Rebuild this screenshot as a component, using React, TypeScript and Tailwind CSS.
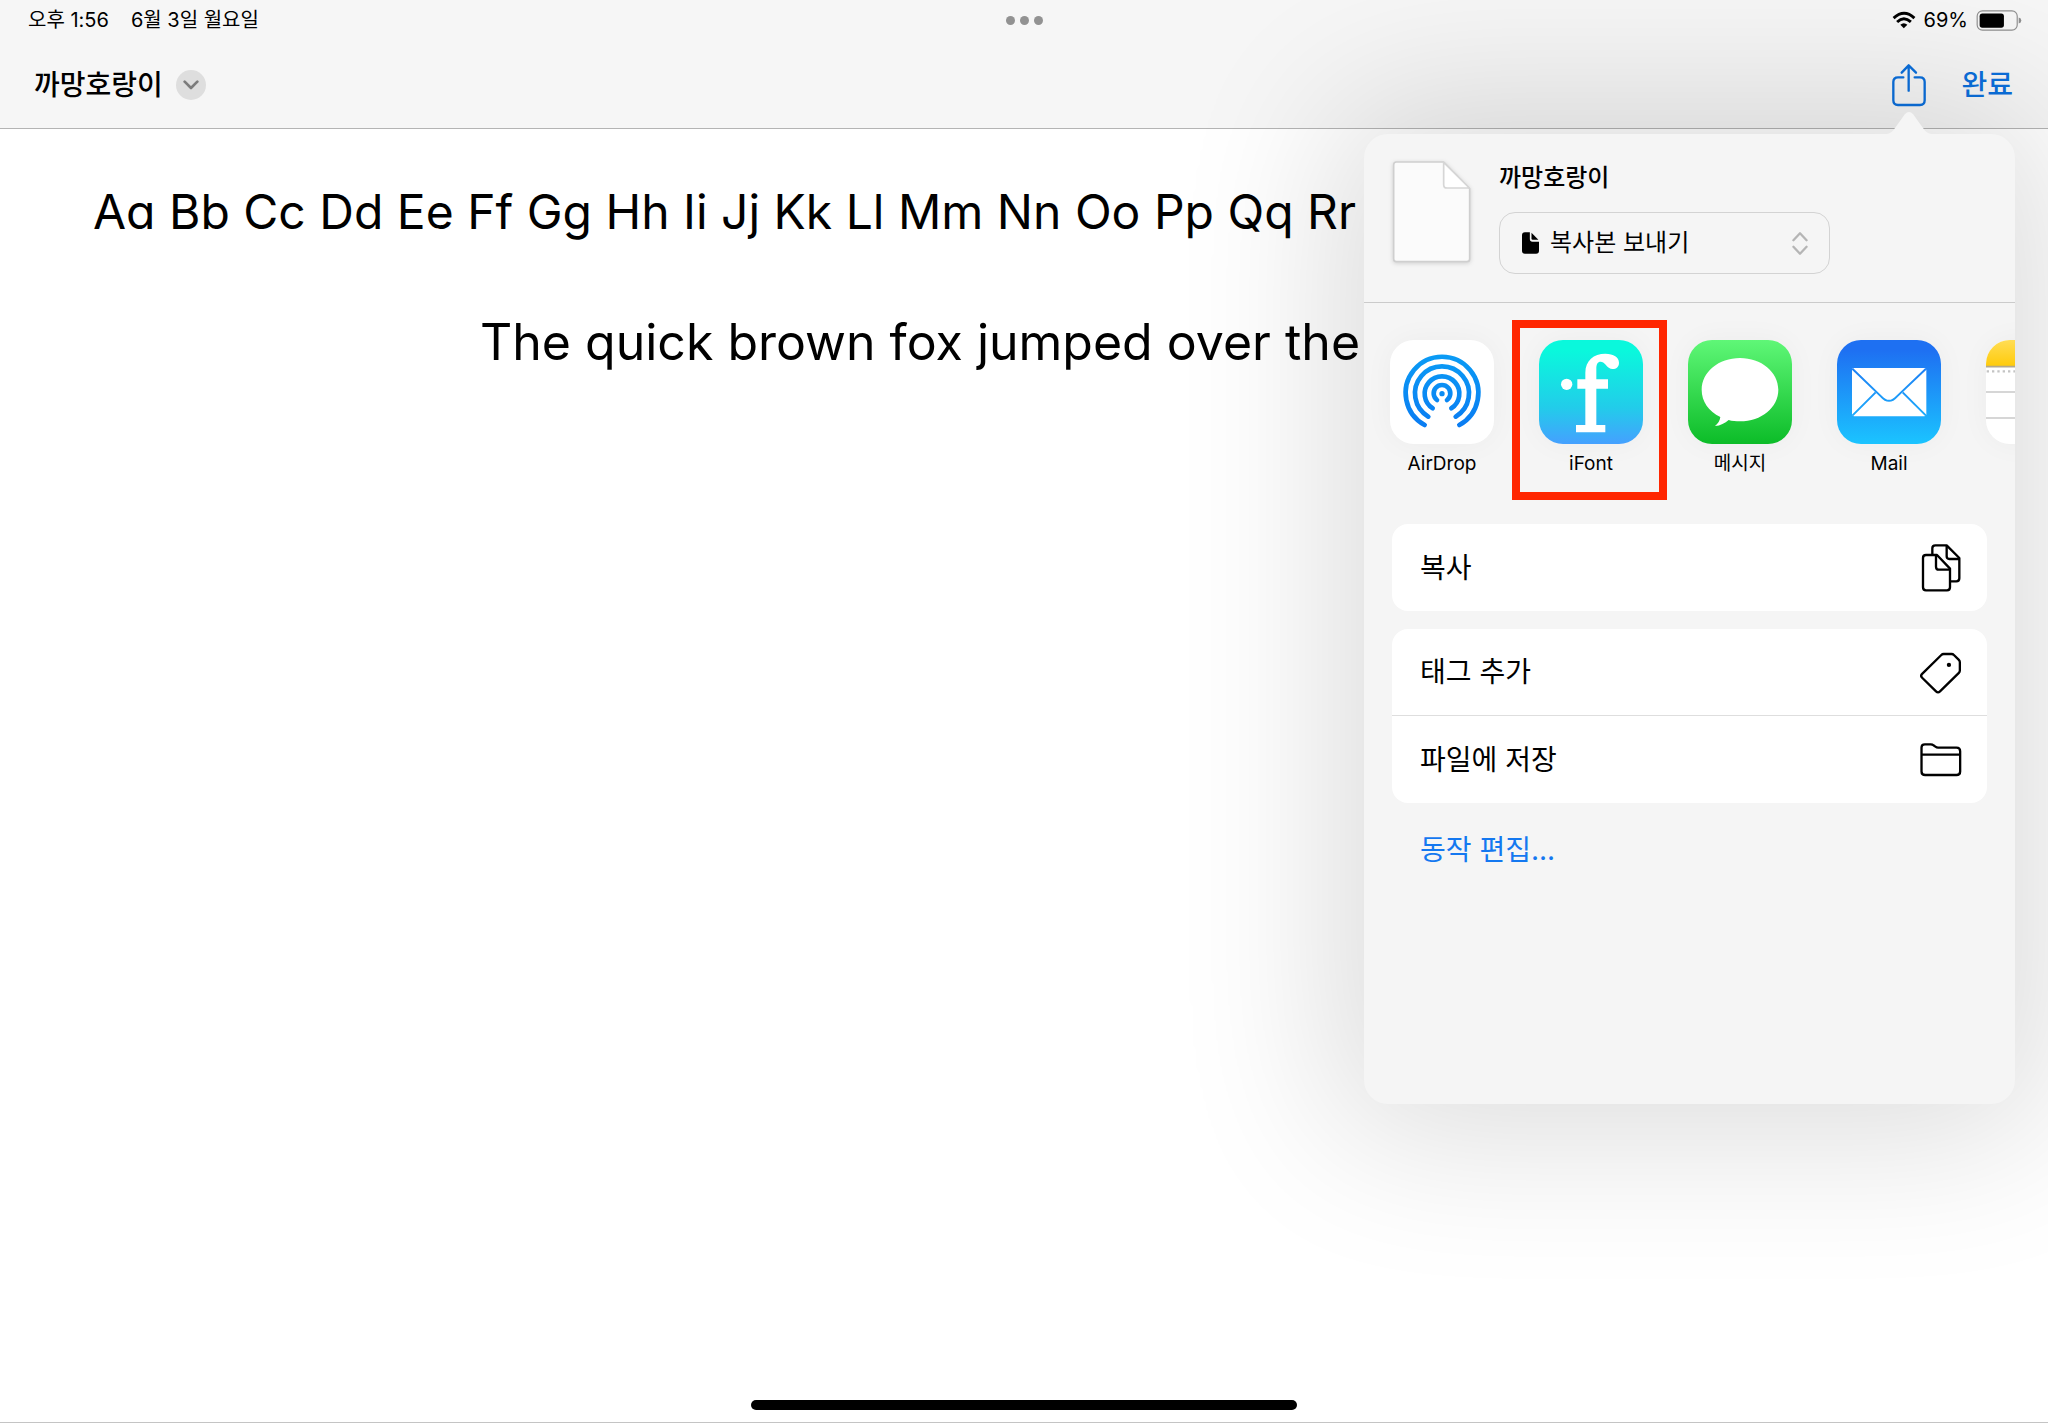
import type { ReactNode } from "react";

interface ShareApp {
  name: string;
  icon: ReactNode;
  highlighted?: boolean;
}

interface Action {
  label: string;
  icon: ReactNode;
}

function ShareIcon() {
  return (
    <svg viewBox="272 186 106 132" className="h-11 w-9" fill="none" stroke="currentColor" strokeWidth="7" strokeLinecap="round" strokeLinejoin="round">
      <path d="M308 229h-16q-14 0-14 14v55q0 14 14 14h66q14 0 14-14v-55q0-14-14-14h-16" />
      <path d="M324 269v-75M303 215l21-22 22 22" />
    </svg>
  );
}

function WifiIcon() {
  return (
    <svg viewBox="270 34 75 56" className="h-5 w-6" fill="none" stroke="#000" strokeWidth="9">
      <path d="M275 56q33-30 65 0" />
      <path d="M286 68q21-20 43 0" />
      <path d="M307 88l-11-11q11-10 22 0z" fill="#000" stroke="none" />
    </svg>
  );
}

function BatteryIcon() {
  return (
    <svg viewBox="528 30 138 64" className="h-[21px] w-[46px]">
      <rect x="530.5" y="32.5" width="122" height="59" rx="16" fill="none" stroke="#8f8f8f" strokeWidth="3.5" />
      <rect x="538" y="41" width="74" height="43" rx="8" fill="#000" />
      <path d="M657 53q8 2 8 9t-8 9z" fill="#8f8f8f" />
    </svg>
  );
}

function DocumentThumb() {
  return (
    <svg viewBox="90 146 252 330" className="-mx-1 -my-1 h-[110px] w-[84px] shrink-0 drop-shadow-sm">
      <path d="M109 158h142l78 80v211q0 8-8 8H109q-8 0-8-8V166q0-8 8-8z" fill="#fbfbfb" stroke="#cfcfcf" strokeWidth="5" />
      <path d="M251 159v67q0 10 10 10h67z" fill="#fff" stroke="#d6d6d6" strokeWidth="5" strokeLinejoin="round" />
    </svg>
  );
}

function CopyIcon() {
  return (
    <svg viewBox="180 100 126 150" className="h-[50px] w-[42px]" fill="none" stroke="#000" strokeWidth="7" strokeLinejoin="round">
      <path d="M217 136v-20q0-9 9-9h34l38 38v61q0 9-9 9h-18" />
      <path d="M260 108v32q0 8 8 8h29" />
      <path d="M198 136h33l39 41v56q0 9-9 9h-63q-9 0-9-9v-88q0-9 9-9z" />
      <path d="M228 137v34q0 9 9 9h32" />
    </svg>
  );
}

function TagIcon() {
  return (
    <svg viewBox="180 428 126 130" className="h-[43px] w-[42px]" fill="none" stroke="#000" strokeWidth="7" strokeLinejoin="round">
      <path d="M244 440q3-3 7-3h24q4 0 7 3l15 15q3 3 3 7v25q0 4-3 7l-57 56q-6 6-12 0l-42-41q-6-6 0-12z" />
      <circle cx="267" cy="470" r="6.5" fill="#000" stroke="none" />
    </svg>
  );
}

function FolderIcon() {
  return (
    <svg viewBox="180 700 126 106" className="h-[35px] w-[42px]" fill="none" stroke="#000" strokeWidth="7" strokeLinejoin="round">
      <path d="M184 717q0-10 10-10h18q5 0 8 3l6 4q4 3 8 3h56q11 0 11 11v61q0 11-11 11h-95q-11 0-11-11z" />
      <path d="M184 738h117" />
    </svg>
  );
}

function AirDropIcon() {
  return (
    <svg viewBox="0 0 312 312" className="size-full">
      <defs>
        <linearGradient id="airdrop" gradientUnits="userSpaceOnUse" x1="0" y1="45" x2="0" y2="262">
          <stop offset="0" stopColor="#0a9bf5" />
          <stop offset="1" stopColor="#0a7cf2" />
        </linearGradient>
      </defs>
      <rect width="312" height="312" fill="#fff" />
      <g fill="none" stroke="url(#airdrop)" strokeWidth="14" strokeLinecap="round">
        <path d="M104 255A109 109 0 1 1 208 255" />
        <path d="M115 230A81 81 0 1 1 197 230" />
        <path d="M128 205A52 52 0 1 1 184 205" />
        <path d="M141 180A25 25 0 1 1 171 180" />
      </g>
      <circle cx="156" cy="161" r="8" fill="#0a8cf4" />
    </svg>
  );
}

function IFontIcon() {
  return (
    <svg viewBox="0 0 312 312" className="size-full">
      <defs>
        <linearGradient id="ifont" x1="0" y1="0" x2="0" y2="1">
          <stop offset="0.1" stopColor="#0af8dc" />
          <stop offset="0.65" stopColor="#22ccea" />
          <stop offset="1" stopColor="#45a0ff" />
        </linearGradient>
      </defs>
      <rect width="312" height="312" fill="url(#ifont)" />
      <circle cx="83" cy="133" r="17" fill="#fff" />
      <path
        d="M115 118h24V98c0-36 25-57 60-57 25 0 41 11 41 27 0 12-8 19-19 19-9 0-15-6-21-13-5-6-10-9-15-9-9 0-13 8-13 20v33h35v28h-35v109h27v22h-88v-22h28V146h-24z"
        fill="#fff"
      />
    </svg>
  );
}

function MessagesIcon() {
  return (
    <svg viewBox="0 0 312 312" className="size-full">
      <defs>
        <linearGradient id="messages" x1="0" y1="0" x2="0" y2="1">
          <stop offset="0" stopColor="#5ff777" />
          <stop offset="1" stopColor="#0cbc28" />
        </linearGradient>
      </defs>
      <rect width="312" height="312" fill="url(#messages)" />
      <path d="M156 54c64 0 115 42 115 95s-51 95-115 95c-12 0-24-1-34-4-11 10-25 17-41 18 9-7 15-16 16-27-35-17-56-47-56-82 0-53 51-95 115-95z" fill="#fff" />
    </svg>
  );
}

function MailIcon() {
  return (
    <svg viewBox="0 0 312 312" className="size-full">
      <defs>
        <linearGradient id="mail" gradientUnits="userSpaceOnUse" x1="0" y1="0" x2="0" y2="312">
          <stop offset="0.1" stopColor="#1e70f2" />
          <stop offset="1" stopColor="#1bc4ff" />
        </linearGradient>
      </defs>
      <rect width="312" height="312" fill="url(#mail)" />
      <rect x="45" y="84" width="223" height="145" rx="6" fill="#fff" />
      <g fill="none" stroke="url(#mail)" strokeWidth="6">
        <path d="M46 86l86 83q24 27 48 0l87-83" />
        <path d="M46 227l70-70M267 227l-70-70" />
      </g>
    </svg>
  );
}

function NotesIcon() {
  return (
    <svg viewBox="0 0 312 312" className="size-full">
      <defs>
        <linearGradient id="notes" x1="0" y1="0" x2="0" y2="1">
          <stop offset="0" stopColor="#ffdd55" />
          <stop offset="1" stopColor="#ffcb0b" />
        </linearGradient>
      </defs>
      <rect width="312" height="312" fill="#fff" />
      <rect width="312" height="78" fill="url(#notes)" />
      <path d="M0 80h312" stroke="#b3a98c" strokeWidth="5" />
      <path d="M2 94h310" stroke="#c4c4c4" strokeWidth="7" strokeDasharray="7 9" />
      <path d="M0 156h312M0 234h312" stroke="#c9c9c9" strokeWidth="4" />
    </svg>
  );
}

const apps: ShareApp[] = [
  { name: "AirDrop", icon: <AirDropIcon /> },
  { name: "iFont", icon: <IFontIcon />, highlighted: true },
  { name: "메시지", icon: <MessagesIcon /> },
  { name: "Mail", icon: <MailIcon /> },
  { name: "", icon: <NotesIcon /> },
];

const actionGroups: Action[][] = [
  [{ label: "복사", icon: <CopyIcon /> }],
  [
    { label: "태그 추가", icon: <TagIcon /> },
    { label: "파일에 저장", icon: <FolderIcon /> },
  ],
];

function StatusBar() {
  return (
    <div className="grid h-10 grid-cols-3 items-center pr-[26px] pl-7 text-xl">
      <div className="flex gap-[22px]">
        <span>오후 1:56</span>
        <span>6월 3일 월요일</span>
      </div>
      <div className="flex justify-center gap-[5px]">
        <span className="size-[9px] rounded-full bg-[#929292]" />
        <span className="size-[9px] rounded-full bg-[#929292]" />
        <span className="size-[9px] rounded-full bg-[#929292]" />
      </div>
      <div className="flex items-center justify-end gap-2">
        <WifiIcon />
        <span>69%</span>
        <BatteryIcon />
      </div>
    </div>
  );
}

function SharePopover() {
  return (
    <aside className="absolute top-[134px] right-[33px] w-[651px] rounded-[24px] bg-[#f5f5f5] shadow-[0_0_160px_30px_rgba(0,0,0,0.14)]">
      <svg viewBox="0 0 44 24" className="absolute right-[84px] bottom-full h-6 w-11" fill="#f5f5f5">
        <path d="M0 24q5-1 8-6L18 4q4-4 8 0l10 14q3 5 8 6z" />
      </svg>

      <header className="flex gap-[29px] border-b border-[#cbcbcb] py-7 pr-7 pl-[30px]">
        <DocumentThumb />
        <div className="flex flex-col">
          <h2 className="text-2xl leading-8 font-medium">까망호랑이</h2>
          <div className="relative mt-[18px]">
            <svg viewBox="0 0 52 66" className="pointer-events-none absolute top-5 left-[23px] h-[22px] w-[17px]">
              <path d="M9 0h15v21q0 8 8 8h20v28q0 9-9 9H9q-9 0-9-9V9q0-9 9-9z" />
              <path d="M29 2l21 21H33q-4 0-4-4z" />
            </svg>
            <select
              aria-label="보내기 방식"
              className="h-[62px] w-[331px] appearance-none rounded-2xl border border-[#d3d3d3] bg-transparent pl-[50px] text-2xl"
            >
              <option>복사본 보내기</option>
            </select>
            <svg viewBox="0 0 48 70" className="pointer-events-none absolute top-5 right-[22px] h-[23px] w-4" fill="none" stroke="#b5b5b5" strokeWidth="7" strokeLinecap="round" strokeLinejoin="round">
              <path d="M4 25L24 4l20 21M4 45l20 21 20-21" />
            </svg>
          </div>
        </div>
      </header>

      <ul className="flex gap-[45px] overflow-hidden px-[26px] pt-[37px] pb-6">
        {apps.map((app, i) => (
          <li key={i} className="relative w-[104px] shrink-0">
            <button type="button" aria-label={app.name || "메모"} className="flex w-full flex-col items-center gap-1.5">
              <span className="block size-[104px] overflow-hidden rounded-[24px] shadow-[0_0_30px_rgba(0,0,0,0.04)]">
                {app.icon}
              </span>
              <span className="h-7 text-[19px] leading-7 whitespace-nowrap">{app.name}</span>
            </button>
            {app.highlighted && (
              <div className="pointer-events-none absolute -top-5 -right-6 -bottom-[22px] -left-[27px] border-8 border-[#ff2600]" />
            )}
          </li>
        ))}
      </ul>

      <div className="space-y-[18px] px-7 pt-[22px]">
        {actionGroups.map((group, i) => (
          <div key={i} className="divide-y divide-[#dedede] rounded-2xl bg-white">
            {group.map((action) => (
              <button
                key={action.label}
                type="button"
                className="flex h-[87px] w-full items-center justify-between pr-[25px] pl-7 text-[28px]"
              >
                <span>{action.label}</span>
                {action.icon}
              </button>
            ))}
          </div>
        ))}
      </div>

      <div className="px-14 pt-[27px] pb-[234px]">
        <button type="button" className="text-[28px] leading-10 text-[#1478f0]">
          동작 편집...
        </button>
      </div>
    </aside>
  );
}

export default function App() {
  return (
    <div className="relative flex min-h-screen flex-col overflow-hidden border-b border-[#c4c4c4] bg-white font-[Inter,'Noto_Sans_CJK_KR',sans-serif] text-black">
      <header className="border-b border-[#b4b4b4] bg-[#f6f6f6]">
        <StatusBar />
        <div className="flex h-22 items-center justify-between pt-0.5 pr-[35px] pl-[34px]">
          <div className="flex items-center gap-[13px]">
            <h1 className="text-[28px] font-medium">까망호랑이</h1>
            <button type="button" aria-label="문서 메뉴" className="flex size-[30px] items-center justify-center rounded-full bg-[#dedede]">
              <svg viewBox="0 0 48 30" className="h-[10px] w-4" fill="none" stroke="#7c7c7c" strokeWidth="8" strokeLinecap="round" strokeLinejoin="round">
                <path d="M5 5l19 19L43 5" />
              </svg>
            </button>
          </div>
          <div className="flex items-center gap-[34px] text-[#0b6fdc]">
            <button type="button" aria-label="공유">
              <ShareIcon />
            </button>
            <button type="button" className="text-[28px] font-medium">
              완료
            </button>
          </div>
        </div>
      </header>

      <main className="flex-1 pt-[43px] leading-[80px] whitespace-nowrap [font-feature-settings:'cv11']">
        <p className="pl-[93px] text-[48px]">Aa Bb Cc Dd Ee Ff Gg Hh Ii Jj Kk Ll Mm Nn Oo Pp Qq Rr</p>
        <p className="mt-[50px] pl-[480px] text-[50px]">The quick brown fox jumped over the</p>
      </main>

      <footer className="flex justify-center pb-3">
        <div className="h-[10px] w-[546px] rounded-full bg-black" />
      </footer>

      <SharePopover />
    </div>
  );
}
